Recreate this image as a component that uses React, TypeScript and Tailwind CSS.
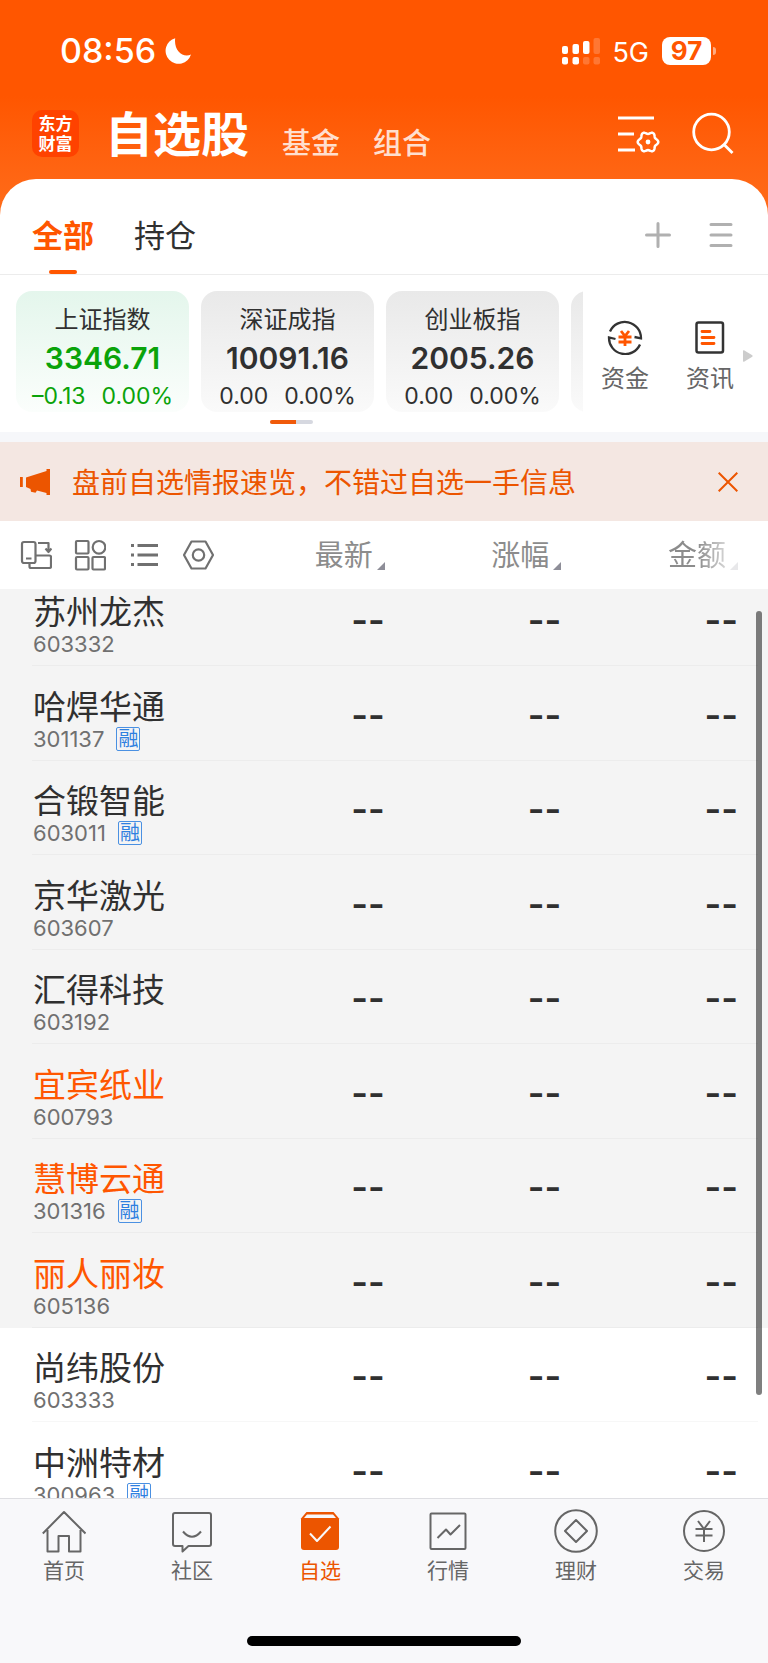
import type { ReactNode } from "react";
import clsx from "clsx";

interface IndexCard {
    name: string;
    value: string;
    change: string;
    percent: string;
    down?: boolean;
}

interface Stock {
    name: string;
    code: string;
    margin?: boolean;
    hot?: boolean;
    plain?: boolean;
}

const indexes: IndexCard[] = [
    { name: "上证指数", value: "3346.71", change: "–0.13", percent: "0.00%", down: true },
    { name: "深证成指", value: "10091.16", change: "0.00", percent: "0.00%" },
    { name: "创业板指", value: "2005.26", change: "0.00", percent: "0.00%" },
];

const stocks: Stock[] = [
    { name: "苏州龙杰", code: "603332" },
    { name: "哈焊华通", code: "301137", margin: true },
    { name: "合锻智能", code: "603011", margin: true },
    { name: "京华激光", code: "603607" },
    { name: "汇得科技", code: "603192" },
    { name: "宜宾纸业", code: "600793", hot: true },
    { name: "慧博云通", code: "301316", margin: true, hot: true },
    { name: "丽人丽妆", code: "605136", hot: true },
    { name: "尚纬股份", code: "603333", plain: true },
    { name: "中洲特材", code: "300963", margin: true, plain: true },
];

const columns = ["最新", "涨幅", "金额"];

// Six-lobed gear outline
const gearPoints = Array.from({ length: 72 }, (_, i) => {
    const angle = (i * Math.PI) / 36;
    const r = 9.2 + 1.1 * Math.cos(6 * angle);
    return `${(31 + r * Math.cos(angle)).toFixed(2)},${(32 + r * Math.sin(angle)).toFixed(2)}`;
}).join(" ");

function StatusBar() {
    return (
        <div className="flex items-center justify-between h-[102px] pl-[60px] pr-[52px] text-white">
            <div className="flex items-center gap-2">
                <span className="text-[34px] leading-none font-medium">08:56</span>
                <svg className="w-7 h-7" viewBox="0 0 28 28" fill="currentColor">
                    <path d="M11.2 1.2A13 13 0 1 0 27 17.6C19 21.500 9.500 13.500 11.200 1.200Z" />
                </svg>
            </div>
            <div className="flex items-center">
                <svg className="w-[38px] h-7" viewBox="0 0 38 28" fill="currentColor">
                    <rect x="0" y="9" width="6" height="8" rx="2" />
                    <rect x="10.500" y="7" width="6.500" height="10" rx="2" />
                    <rect x="21" y="4" width="6.500" height="13" rx="2" />
                    <rect x="31.500" y="1" width="6.500" height="16" rx="2" opacity=".2" />
                    <rect x="0" y="20" width="6" height="7.500" rx="2" />
                    <rect x="10.500" y="20" width="6.500" height="7.500" rx="2" />
                    <rect x="21" y="20" width="6.500" height="7.500" rx="2" opacity=".2" />
                    <rect x="31.500" y="20" width="6.500" height="7.500" rx="2" opacity=".2" />
                </svg>
                <span className="ml-3 pt-0.5 text-[27px] leading-none">5G</span>
                <span className="ml-[13px] flex items-center justify-center w-[49px] h-7 rounded-lg bg-white text-[26px] leading-none font-bold text-[#ff5600]">
                    97
                </span>
                <span className="ml-0.5 w-[3px] h-2 rounded-r-full bg-white/50" />
            </div>
        </div>
    );
}

function Header() {
    return (
        <div className="flex items-start h-[77px] pl-8 pr-[34px] pt-2 text-white">
            <a
                href="#home"
                className="flex flex-col items-center justify-center w-[47px] h-[47px] rounded-[10px] bg-[#ff4200] text-[17px] leading-5 font-bold"
            >
                <span>东方</span>
                <span>财富</span>
            </a>
            <nav className="flex items-end ml-[26px] gap-[33px]">
                <a href="#stocks" className="text-[48px] leading-[50px] font-bold">自选股</a>
                <a href="#funds" className="text-[29px] leading-8 font-medium text-[#ffdfcf]">基金</a>
                <a href="#combo" className="text-[29px] leading-8 font-medium text-[#ffdfcf]">组合</a>
            </nav>
            <div className="flex gap-8 ml-auto">
                <button aria-label="筛选设置">
                    <svg className="w-[43px] h-11" viewBox="0 0 43 44" fill="none" stroke="currentColor" strokeWidth="2.800">
                        <path d="M1 8h36M1 24h16M1 40h17" />
                        <polygon points={gearPoints} strokeWidth="2.500" strokeLinejoin="round" />
                        <circle cx="31" cy="32" r="2.400" fill="currentColor" stroke="none" />
                    </svg>
                </button>
                <button aria-label="搜索">
                    <svg className="w-[42px] h-11" viewBox="0 0 42 44" fill="none" stroke="currentColor" strokeWidth="2.800">
                        <circle cx="19.500" cy="22" r="17.800" />
                        <path d="m31.500 34 9 9" />
                    </svg>
                </button>
            </div>
        </div>
    );
}

function GroupTabs() {
    return (
        <div className="flex items-stretch h-24 pl-8 pr-[34px] border-b border-[#ececec]">
            <button className="flex flex-col items-center text-[31px] font-bold text-[#ff5600]">
                <span className="pt-[33px] leading-[48px]">全部</span>
                <span className="mt-auto w-7 h-1 rounded-full bg-[#ff5600]" />
            </button>
            <button className="ml-10 pt-[33px] flex text-[31px] leading-[48px] text-[#303030]">持仓</button>
            <div className="flex items-center ml-auto pt-4 gap-9 text-[#b0b0b0]">
                <button aria-label="添加">
                    <svg className="w-7 h-7" viewBox="0 0 28 28" stroke="currentColor" strokeWidth="3" strokeLinecap="round">
                        <path d="M14 2.500v23M2.500 14h23" />
                    </svg>
                </button>
                <button aria-label="菜单">
                    <svg className="w-[26px] h-7" viewBox="0 0 26 28" stroke="currentColor" strokeWidth="3" strokeLinecap="round">
                        <path d="M3 3.500h20M3 14h20M3 24.500h20" />
                    </svg>
                </button>
            </div>
        </div>
    );
}

function IndexStrip() {
    return (
        <section className="bg-white border-b-[10px] border-[#f6f7fa]">
            <div className="flex pt-4 pl-4 pr-[15px]">
                <div className="flex-1 min-w-0 flex gap-3 overflow-hidden">
                    {indexes.map((item) => (
                        <a
                            key={item.name}
                            href="#index"
                            className={clsx(
                                "flex flex-col items-center shrink-0 w-[173px] h-[121px] pt-[11px] rounded-2xl bg-linear-to-b",
                                item.down
                                    ? "from-[#e4f6ec] to-[#fbfefc] text-[#0aa30a]"
                                    : "from-[#e9e9e9] to-[#fafafa] text-[#303030]"
                            )}
                        >
                            <span className="text-[24px] leading-9 text-[#303030]">{item.name}</span>
                            <span className="text-[30px] leading-10 font-semibold">{item.value}</span>
                            <span className="flex gap-4 text-[23px] leading-9">
                                <span>{item.change}</span>
                                <span>{item.percent}</span>
                            </span>
                        </a>
                    ))}
                    <div className="shrink-0 w-[173px] h-[121px] rounded-2xl bg-linear-to-b from-[#e9e9e9] to-[#fafafa]" />
                </div>
                <div className="flex items-start pt-7 pl-[18px] text-[24px] leading-9 text-[#666]">
                    <a href="#capital" className="flex flex-col items-center gap-1.5">
                        <svg className="w-9 h-9" viewBox="0 0 36 36" fill="none" stroke="#333" strokeWidth="2.300">
                            <path d="M3 12.500A16.200 16.200 0 0 1 34 19.300L27.500 18M33 25.500A16.200 16.200 0 0 1 2 18.500L8.500 20" />
                            <path d="m14 12 4 5 4-5M11.500 18h13M11.500 23h13M18 17v10" stroke="#ff5600" strokeWidth="2.800" />
                        </svg>
                        资金
                    </a>
                    <a href="#news" className="flex flex-col items-center gap-1.5 ml-[37px]">
                        <svg className="w-9 h-9" viewBox="0 0 36 36" fill="none" stroke="#333" strokeWidth="2.500">
                            <rect x="4.500" y="3.500" width="26.500" height="30" rx="2" />
                            <path d="M10 12.500h8M10 18.500h12M10 24.500h12" stroke="#ff5600" strokeWidth="2.800" strokeLinecap="round" />
                        </svg>
                        资讯
                    </a>
                    <svg className="w-2.5 h-3 mt-[31px] ml-[9px]" viewBox="0 0 10 12" fill="#ccc">
                        <path d="M0 1q0-1 1-.7l8.300 5q.7.7 0 1.400L1 11.700q-1 .3-1-.7Z" />
                    </svg>
                </div>
            </div>
            <div className="flex w-[43px] h-1 mt-2 mb-2 ml-[270px] rounded-full overflow-hidden bg-[#d6d8e0]">
                <div className="w-[26px] bg-[#f05a0a]" />
            </div>
        </section>
    );
}

function Notice() {
    return (
        <div className="flex items-center h-[79px] pl-5 pr-[30px] bg-[#f4e7e2] text-[#ec5500]">
            <svg className="w-[30px] h-7" viewBox="0 0 30 28" fill="currentColor">
                <path d="M0 9h2.800v10H0zM6 9.500 26.500 3V1H30v26h-3.500v-2L17 22.500l-1.500 2.300-4.500-1-.5-2.800L6 19Z" />
            </svg>
            <a href="#notice" className="ml-[22px] pt-0.5 text-[28px] leading-10">盘前自选情报速览，不错过自选一手信息</a>
            <button aria-label="关闭" className="ml-auto">
                <svg className="w-5 h-5" viewBox="0 0 20 20" stroke="currentColor" strokeWidth="2">
                    <path d="m.7.7 18.600 18.600M19.300.7.7 19.300" />
                </svg>
            </button>
        </div>
    );
}

function ViewIcon({ label, children }: { label: string; children: ReactNode }) {
    return (
        <button aria-label={label}>
            <svg className="w-8 h-8" viewBox="0 0 32 32" fill="none" stroke="#707070" strokeWidth="2.200" strokeLinejoin="round">
                {children}
            </svg>
        </button>
    );
}

function StockTable() {
    return (
        <table className="w-full table-fixed border-collapse">
            <thead>
                <tr className="h-[68px] bg-white">
                    <th className="w-[31%] p-0">
                        <div className="flex items-center gap-[22px] pl-5">
                            <ViewIcon label="切换布局">
                                <rect x="2" y="3" width="13.500" height="21" rx="2" />
                                <path d="M6 19.500h5.500M18 4h10.500v9M25.500 9.500l3 3.500 3-3.500M15.500 16.500h14q1.500 0 1.500 1.500v9.500q0 1.500-1.500 1.500H11q-1.500 0-1.500-1.500V24" />
                            </ViewIcon>
                            <ViewIcon label="网格">
                                <rect x="2" y="2" width="12.500" height="12.500" rx="1" />
                                <circle cx="25" cy="8.300" r="6.300" />
                                <rect x="2" y="18" width="12.500" height="12.500" rx="1" />
                                <rect x="18.500" y="18" width="12.500" height="12.500" rx="1" />
                            </ViewIcon>
                            <ViewIcon label="列表">
                                <path d="M9.500 6.500h20.500M9.500 16h20.500M9.500 25.500h20.500M3 6.500h3M3 16h3M3 25.500h3" strokeWidth="3" />
                            </ViewIcon>
                            <ViewIcon label="设置">
                                <path d="M9.500 2.500h14L31 16l-7.500 13.500h-14L2 16Z" />
                                <circle cx="16.500" cy="16" r="5.700" />
                            </ViewIcon>
                        </div>
                    </th>
                    {columns.map((label, i) => (
                        <th key={label} className="w-[23%] p-0 font-normal">
                            <button
                                className={clsx(
                                    "flex items-end gap-1 w-full justify-end pt-0.5 pr-[30px] text-[29px] leading-10",
                                    i === 2
                                        ? "bg-linear-to-r from-[#8c8c8c] from-60% to-white to-85% bg-clip-text text-transparent"
                                        : "text-[#8c8c8c]"
                                )}
                            >
                                {label}
                                <svg className={clsx("w-2 h-2 mb-1.5", i === 2 ? "text-[#e8e8ea]" : "text-[#8e8e98]")} viewBox="0 0 8 8" fill="currentColor">
                                    <path d="M8 0v8H0Z" />
                                </svg>
                            </button>
                        </th>
                    ))}
                </tr>
            </thead>
            <tbody className="text-[#303030]">
                {stocks.map((stock) => (
                    <tr
                        key={stock.code}
                        className={clsx("relative h-[94px] even:h-[95px] first:h-[77px]", stock.plain ? "bg-white" : "bg-[#f4f4f4]")}
                    >
                        <td className="p-0 pl-[33px] pb-2 align-bottom">
                            <div className={clsx("text-[33px] leading-9", stock.hot && "text-[#ff5600]")}>{stock.name}</div>
                            <div className="flex items-center gap-3 text-[22px] leading-7 text-[#707070]">
                                {stock.code}
                                {stock.margin && (
                                    <span className="flex items-center justify-center w-6 h-6 border border-[#4a90e2] rounded-xs text-[20px] leading-none text-[#2f80e0]">
                                        融
                                    </span>
                                )}
                            </div>
                            <div className="absolute left-8 right-2.5 bottom-0 h-px bg-black/3" />
                        </td>
                        {columns.map((column) => (
                            <td key={column} className="p-0 pr-[30px] pb-[26px] align-bottom text-right text-[36px] leading-10 font-semibold">
                                --
                            </td>
                        ))}
                    </tr>
                ))}
            </tbody>
        </table>
    );
}

function NavItem({ label, active, children }: { label: string; active?: boolean; children: ReactNode }) {
    return (
        <a href="#nav" className={clsx("flex flex-col items-center flex-1 text-[21px] leading-8", active ? "text-[#ec5500]" : "text-[#666]")}>
            <svg className="w-11 h-11 mb-0.5" viewBox="0 0 44 44" fill="none" stroke="currentColor" strokeWidth="2" strokeLinejoin="round">
                {children}
            </svg>
            {label}
        </a>
    );
}

function BottomNav() {
    return (
        <footer className="shrink-0 bg-[#f8f8fa] border-t border-[#dedee2]">
            <nav className="flex pt-2.5">
                <NavItem label="首页">
                    <path d="M.8 24.500 22 3l21.500 21.500M5.500 21v21.500h11V27h10.500v15.500H38.500V21" />
                </NavItem>
                <NavItem label="社区">
                    <path d="M5 4h34q2 0 2 2v29q0 2-2 2H18.500l-6 5.500V37H5q-2 0-2-2V6q0-2 2-2Z" />
                    <path d="M13 22.500q9 10.500 18 0" />
                </NavItem>
                <NavItem label="自选" active>
                    <path d="M8.500 3h27L41 9.500V38q0 3-3 3H6q-3 0-3-3V9.500Z" fill="currentColor" stroke="none" />
                    <path d="M9 5.500h26l3 3.500H6Z" fill="#f8f8fa" stroke="none" />
                    <path d="m12 24.500 7 7.500 13.500-14.500" stroke="#f8f8fa" />
                </NavItem>
                <NavItem label="行情">
                    <rect x="4.500" y="4.500" width="35" height="35.500" rx="1" />
                    <path d="m11.500 29 8.500-8.500 4.500 5L34 16" />
                </NavItem>
                <NavItem label="理财">
                    <circle cx="22" cy="22" r="20.800" />
                    <path d="m22 11 11 11-11 11-11-11Z" />
                </NavItem>
                <NavItem label="交易">
                    <circle cx="22" cy="22" r="20" />
                    <path d="m16 12 6 8 6-8M13.500 20h17M13.500 26.500h17M22 20v13" />
                </NavItem>
            </nav>
            <div className="w-[274px] h-2.5 mt-[49px] mb-[17px] mx-auto rounded-full bg-black" />
        </footer>
    );
}

export default function App() {
    return (
        <div className="flex flex-col h-screen overflow-hidden bg-white font-[Inter,'Noto_Sans_CJK_SC',sans-serif]">
            <header className="shrink-0 bg-linear-to-b from-[#ff5600] from-35% to-[#ff6d1a] to-80%">
                <StatusBar />
                <Header />
                <div className="rounded-t-[36px] bg-white">
                    <GroupTabs />
                </div>
            </header>
            <main className="relative flex-1 min-h-0 overflow-hidden">
                <IndexStrip />
                <Notice />
                <StockTable />
                {/* Scroll position */}
                <div className="absolute right-1.5 top-[336px] bottom-[103px] w-1.5 rounded-full bg-black/50" />
            </main>
            <BottomNav />
        </div>
    );
}
